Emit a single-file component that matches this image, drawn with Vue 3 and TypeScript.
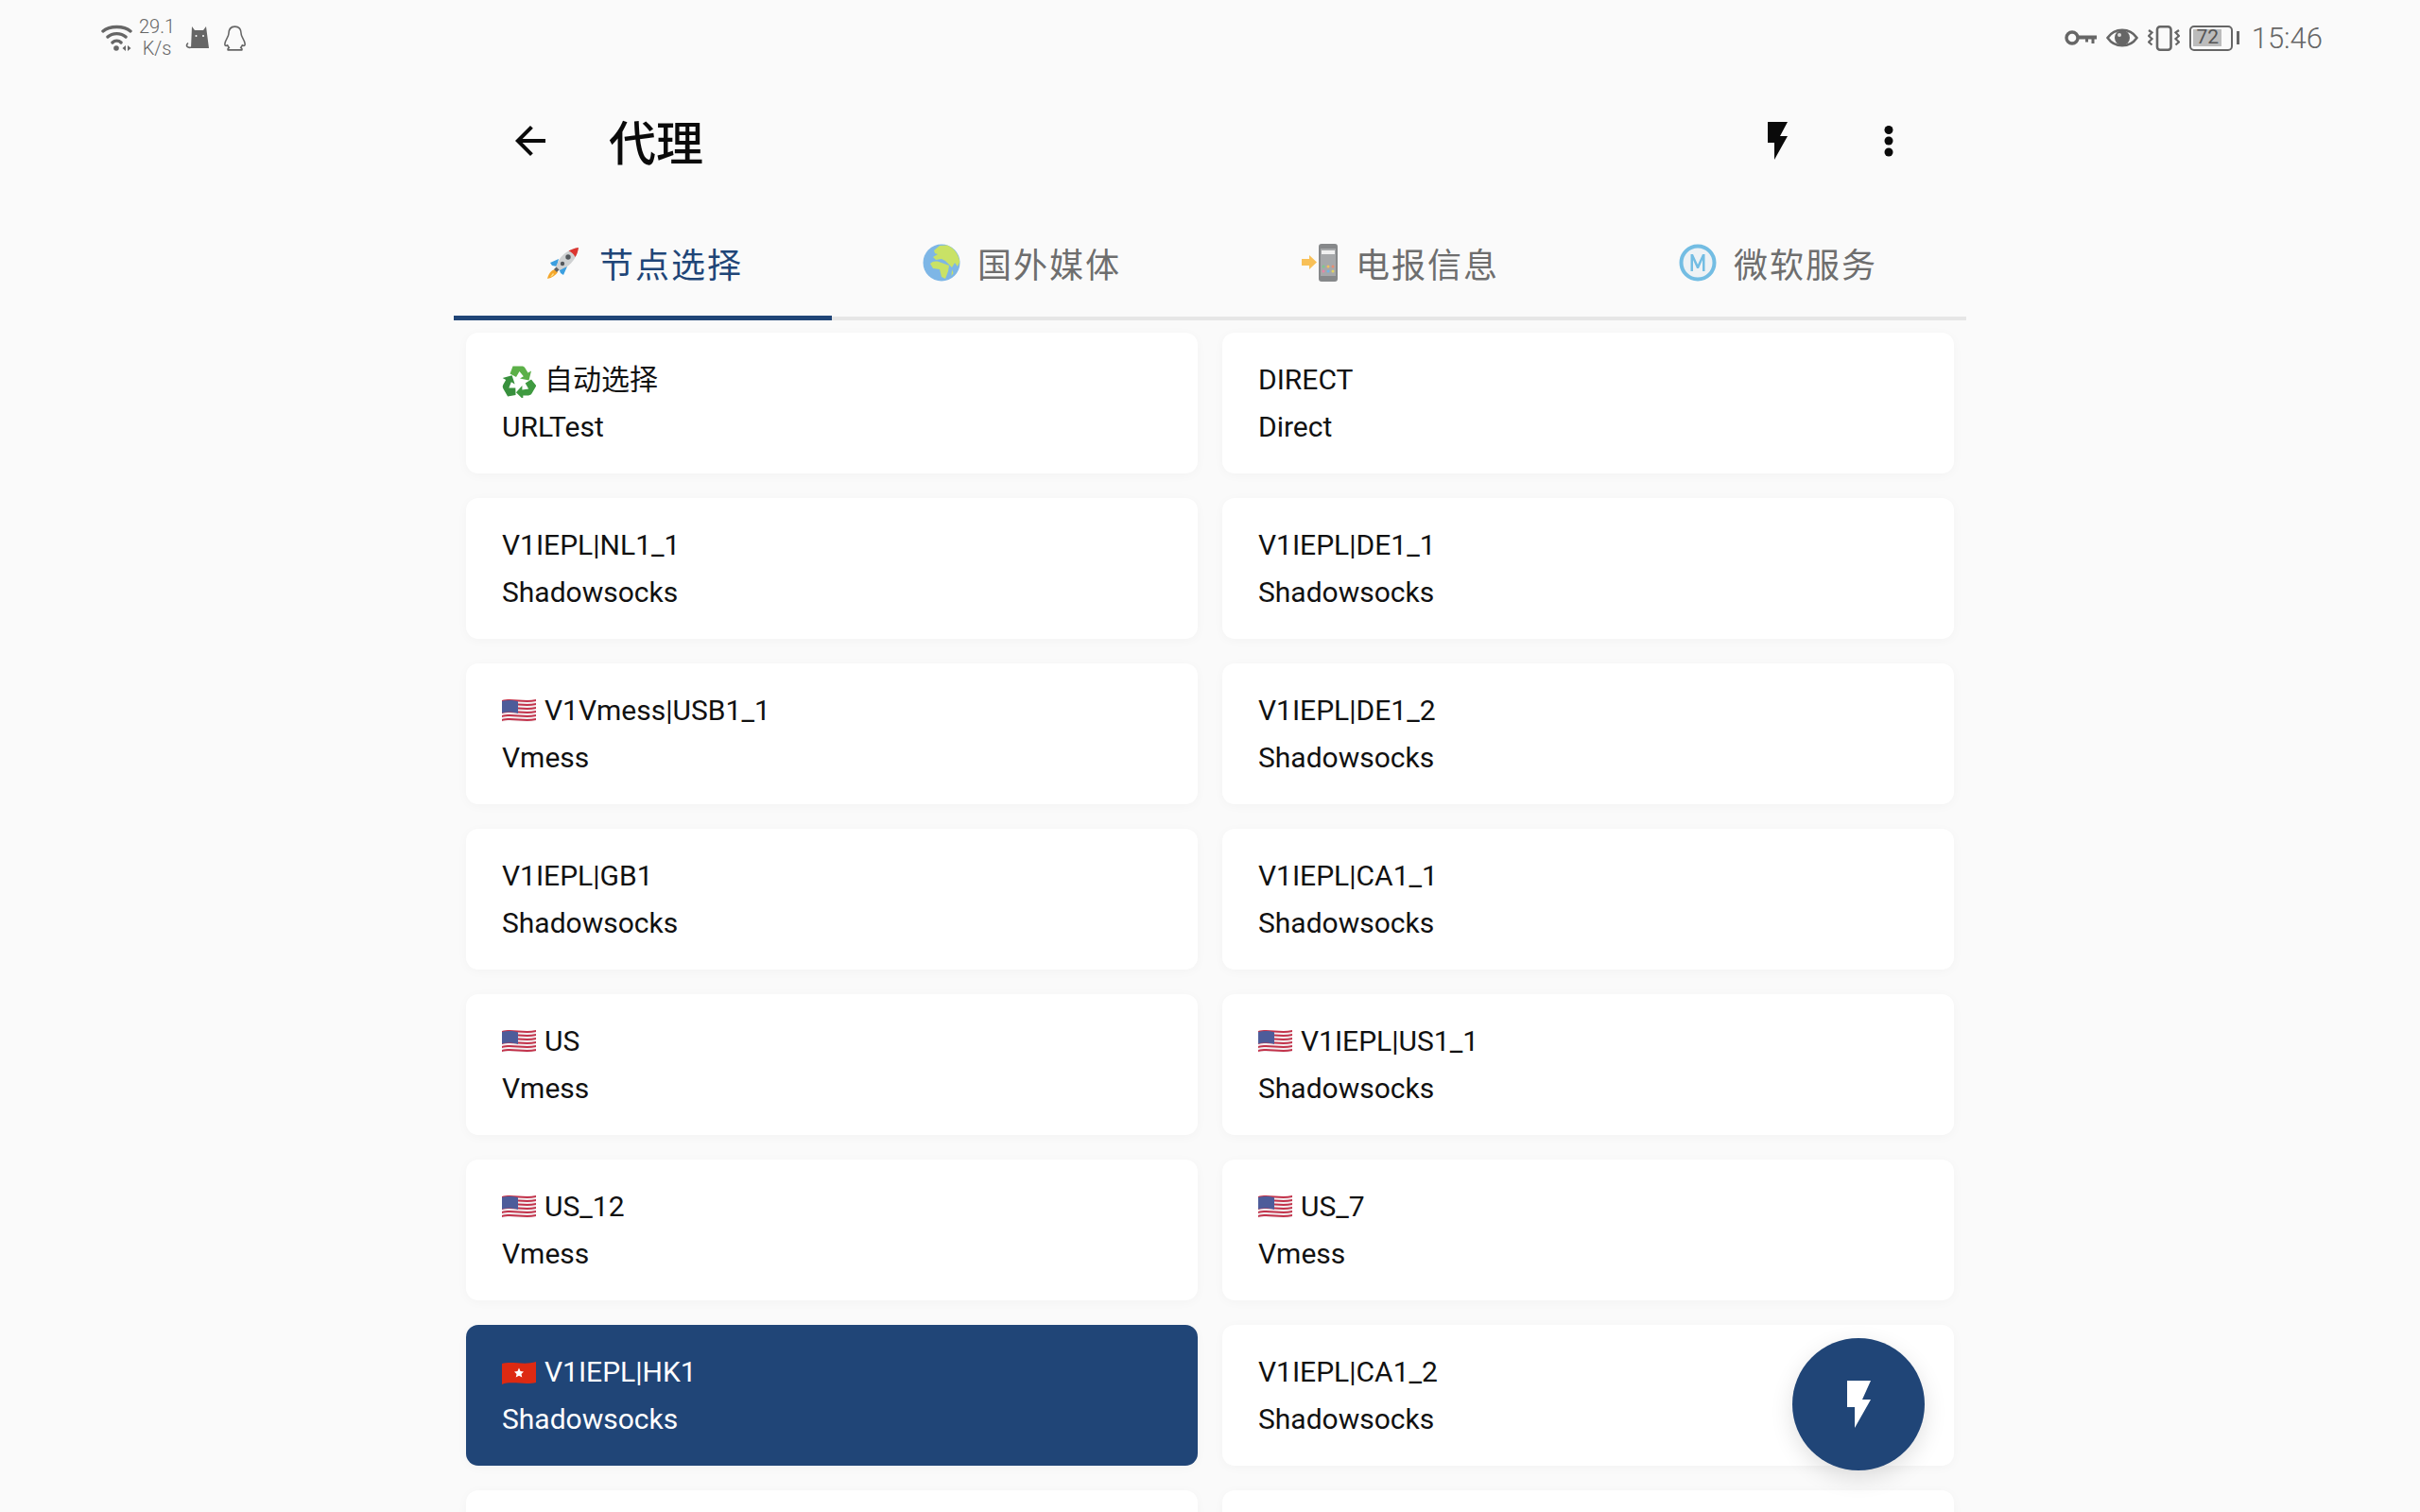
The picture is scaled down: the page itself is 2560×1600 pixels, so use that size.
<script setup lang="ts">
interface ProxyItem { name: string; type: string; flag?: string; selected?: boolean }
const tabs = [
  { key: 'rocket', label: '节点选择' },
  { key: 'globe', label: '国外媒体' },
  { key: 'phone', label: '电报信息' },
  { key: 'ms', label: '微软服务' },
]
const items: ProxyItem[] = [
  { name: '自动选择', type: 'URLTest', flag: 'recycle' },
  { name: 'DIRECT', type: 'Direct' },
  { name: 'V1IEPL|NL1_1', type: 'Shadowsocks' },
  { name: 'V1IEPL|DE1_1', type: 'Shadowsocks' },
  { name: 'V1Vmess|USB1_1', type: 'Vmess', flag: 'us' },
  { name: 'V1IEPL|DE1_2', type: 'Shadowsocks' },
  { name: 'V1IEPL|GB1', type: 'Shadowsocks' },
  { name: 'V1IEPL|CA1_1', type: 'Shadowsocks' },
  { name: 'US', type: 'Vmess', flag: 'us' },
  { name: 'V1IEPL|US1_1', type: 'Shadowsocks', flag: 'us' },
  { name: 'US_12', type: 'Vmess', flag: 'us' },
  { name: 'US_7', type: 'Vmess', flag: 'us' },
  { name: 'V1IEPL|HK1', type: 'Shadowsocks', flag: 'hk', selected: true },
  { name: 'V1IEPL|CA1_2', type: 'Shadowsocks' },
  { name: '', type: '' },
  { name: '', type: '' },
]
const wave = (y: number) => `M0 ${y + 1}C10 ${y - 2} 24 ${y + 3} 36 ${y}V${y + 2}C24 ${y + 5} 10 ${y} 0 ${y + 3}Z`
const usStripes = [1, 5, 9, 13, 17, 21].map(wave)
const recycleArrow = 'M11.500 2.500H21C22.500 2.500 23.500 3 24.500 4.500L27.500 9.500L31 7.500L28.500 17.500L19 15.500L22.800 13.300L18.500 8L15 14L8.500 10.500Z'
</script>

<template>
  <div class="screen">
    <div class="status">
      <div class="status-left">
        <svg class="s-wifi" width="33" height="28" viewBox="0 0 33 28">
          <path d="M2 7C9 1 24 1 31 7M7 13C12 8.500 21 8.500 26 13M12 19C14.500 16.500 18.500 16.500 21 19" fill="none" stroke="#666" stroke-width="3.400" stroke-linecap="round" />
          <circle cx="16" cy="25" r="2.800" fill="#666" />
          <path d="M26 22v6l-3.500-3zM28 22v6l3.500-3z" fill="#666" />
        </svg>
        <div class="speed"><span>29.1</span><span>K/s</span></div>
        <svg class="s-cat" width="26" height="24" viewBox="0 0 26 24">
          <path d="M7 0L10 4H19L22 0L25 23H6Z" fill="#666" />
          <path d="M7 22C2 23.500 0 20 3 17.500" fill="none" stroke="#666" stroke-width="1.600" />
          <circle cx="11.500" cy="10" r="1" fill="#fff" /><circle cx="19" cy="10" r="1" fill="#fff" />
        </svg>
        <svg class="s-qq" width="25" height="27" viewBox="2 2 22 24">
          <path d="M13 3C8.500 3 7 6.500 7 10.500c0 2-3.500 5.500-3.500 9 0 1.500 1 2 2.500 1 .5 1 1 1.500 1.500 2.500-1 .5-1.500 1-1 2h13c.5-1 0-1.500-1-2 .5-1 1-1.500 1.500-2.500 1.500 1 2.500.5 2.500-1 0-3.500-3.500-7-3.500-9C19 6.500 17.500 3 13 3z" fill="none" stroke="#666" stroke-width="1.400" />
        </svg>
      </div>
      <div class="status-right">
        <svg width="34" height="16" viewBox="0 0 34 16">
          <circle cx="8" cy="8" r="6" fill="none" stroke="#666" stroke-width="3.400" />
          <path d="M13 5.500H34V9.500H31.500V14H28.500V9.500H25V12.500H22V9.500H13Z" fill="#666" />
        </svg>
        <svg width="34" height="24" viewBox="0 0 34 24">
          <path d="M1.500 12C9 1 25 1 32.500 12 25 23 9 23 1.500 12z" fill="none" stroke="#666" stroke-width="2.600" />
          <circle cx="17" cy="12" r="8" fill="#666" />
          <circle cx="14" cy="9" r="2" fill="#ddd" />
        </svg>
        <svg width="34" height="27" viewBox="0 0 34 27">
          <rect x="10" y="1.300" width="14.500" height="24.400" rx="3" fill="none" stroke="#666" stroke-width="2.600" />
          <path d="M1 5l3.500 2.500L1 11l3.500 3L1 17.500l3.500 3M33 5l-3.500 2.500L33 11l-3.500 3L33 17.500l-3.500 3" fill="none" stroke="#666" stroke-width="2.200" />
        </svg>
        <div class="battery"><div class="batt-body"><div class="batt-fill">72</div></div><div class="batt-cap"></div></div>
        <span class="clock">15:46</span>
      </div>
    </div>

    <main class="page">
      <header class="appbar">
        <div class="appbar-left">
          <svg width="48" height="48" viewBox="0 0 24 24"><path d="M20 11H7.830l5.590-5.590L12 4l-8 8 8 8 1.410-1.410L7.830 13H20z" fill="#0a0a0a" /></svg>
          <h1>代理</h1>
        </div>
        <div class="appbar-right">
          <span class="icon-box"><svg width="21" height="40" viewBox="0 0 21 40"><path d="M0 0H21L13 15H21L7 40V22H0Z" fill="#0a0a0a" /></svg></span>
          <svg width="48" height="48" viewBox="0 0 48 48"><circle cx="24" cy="12.500" r="4.500" fill="#0a0a0a" /><circle cx="24" cy="24" r="4.500" fill="#0a0a0a" /><circle cx="24" cy="36" r="4.500" fill="#0a0a0a" /></svg>
        </div>
      </header>

      <nav class="tabs">
        <div v-for="(t, i) in tabs" :key="t.key" class="tab" :class="{ active: i === 0 }">
          <svg v-if="t.key === 'rocket'" width="40" height="40" viewBox="0 0 40 40">
            <path d="M15 16L6 20L8 23L13 24ZM24 24L20 33L17 31L15 26Z" fill="#3b9fe0" />
            <path d="M11 27C7 28 4 32 3 37c5-1 9-4 11-7z" fill="#f4a62a" />
            <path d="M9 31c-1 1-2 3-3 4 2-.5 3-1.500 4-3z" fill="#fde18a" />
            <path d="M10 27L13 24L16 27L13 30Z" fill="#5f6266" />
            <path d="M36 4C28 5 20 10 16 16L12 24L16 28L24 24C30 20 35 12 36 4Z" fill="#cfd1d2" />
            <path d="M36 4C32 4.500 28 6 25.500 7.500C28.500 8.500 31 11 32.500 14C34.500 11 35.500 7.500 36 4Z" fill="#dc3530" />
            <circle cx="25" cy="14" r="2.700" fill="#54585c" /><circle cx="19" cy="21" r="2.200" fill="#54585c" />
          </svg>
          <svg v-else-if="t.key === 'globe'" width="40" height="40" viewBox="0 0 40 40">
            <circle cx="20" cy="20" r="19.500" fill="#7db6e6" />
            <path d="M12 7L18 2L26 1.500C33 4 38 11 39.300 19L37 24L34 20L31 25L28 22L24 18L20 16L14 17L11 14L16 11L13 10Z" fill="#c9e266" />
            <path d="M8 21C11 17.500 16 18 20 20L28 23L27 29L24 37L20 35L18 27L11 26Z" fill="#c9e266" />
            <path d="M31 27l1.500 4-2 3z" fill="#c9e266" />
          </svg>
          <svg v-else-if="t.key === 'phone'" width="40" height="40" viewBox="0 0 40 40">
            <path d="M1 16H9V12L17 19.500L9 27V23H1Z" fill="#f8c057" />
            <rect x="19" y="0" width="20" height="40" rx="3" fill="#86888a" />
            <rect x="21" y="5" width="16" height="29" fill="#a6a8aa" />
            <rect x="22" y="7" width="14" height="4" fill="#f0f0f0" />
            <circle cx="24" cy="24" r="1.500" fill="#7bc98e" /><circle cx="29" cy="24" r="1.500" fill="#f0c060" /><circle cx="34" cy="24" r="1.500" fill="#e88c70" />
            <circle cx="24" cy="29" r="1.500" fill="#e884a6" /><circle cx="29" cy="29" r="1.500" fill="#72b4e4" /><circle cx="34" cy="29" r="1.500" fill="#e2d45e" />
          </svg>
          <svg v-else width="40" height="40" viewBox="0 0 40 40">
            <circle cx="20" cy="20" r="17.500" fill="#eef2f5" stroke="#73bde3" stroke-width="4" />
            <path d="M12.500 29V11h2.500l5 11 5-11h2.500v18h-2.500V17l-4 9h-2l-4-9v12z" fill="#73bde3" />
          </svg>
          <span>{{ t.label }}</span>
        </div>
      </nav>

      <section class="grid">
        <article v-for="(it, i) in items" :key="i" class="card" :class="{ selected: it.selected }">
          <div class="name">
            <svg v-if="it.flag === 'us'" class="flag" width="36" height="28" viewBox="0 0 36 28">
              <path d="M0 3C10 0 24 5 36 2V24C24 27 10 22 0 25Z" fill="#f3eef0" />
              <path v-for="(d, s) in usStripes" :key="s" :d="d" fill="#c2334b" />
              <path d="M0 3C6 1.500 12 2 17 3.300V16C12 14.500 6 14 0 15.500Z" fill="#4d5c9a" />
            </svg>
            <svg v-else-if="it.flag === 'hk'" class="flag" width="36" height="28" viewBox="0 0 36 28">
              <path d="M0 4C10 1 24 6 36 2V24C24 27 10 22 0 26Z" fill="#dd2a12" />
              <path d="M18 8.500l1.500 3.500 3.500.5-2.500 2.500.8 3.500-3.300-1.800-3.300 1.800.8-3.500L13 12.500l3.500-.5z" fill="#fff" />
            </svg>
            <svg v-else-if="it.flag === 'recycle'" class="flag" width="36" height="36" viewBox="0 0 36 36">
              <path :d="recycleArrow" fill="#5cb048" />
              <path :d="recycleArrow" fill="#3f9a40" transform="rotate(120 18 20)" />
              <path :d="recycleArrow" fill="#38903d" transform="rotate(240 18 20)" />
            </svg>
            <span>{{ it.name }}</span>
          </div>
          <div class="type">{{ it.type }}</div>
        </article>
      </section>

      <button class="fab" type="button" aria-label="test">
        <svg width="25" height="50" viewBox="0 0 25 50"><path d="M0 0H25L16 20H25L8 50V28H0Z" fill="#fff" /></svg>
      </button>
    </main>
  </div>
</template>

<style>
html, body { margin: 0; background: #fafafa; }
</style>

<style scoped>
.screen {
  width: 2560px;
  height: 1600px;
  overflow: hidden;
  background: #fafafa;
  font-family: Roboto, "Noto Sans CJK SC", sans-serif;
}
.status {
  height: 80px;
  padding: 0 103px 0 107px;
  box-sizing: border-box;
  display: flex;
  align-items: center;
  justify-content: space-between;
  color: #666;
}
.status-left { display: flex; align-items: center; }
.s-cat { margin-left: 12px; }
.s-qq { margin-left: 14px; }
.status-right { display: flex; align-items: center; gap: 10px; }
.speed {
  width: 36px;
  margin-left: 8px;
  display: flex;
  flex-direction: column;
  align-items: center;
  font-size: 20px;
  line-height: 23px;
  font-weight: 300;
  white-space: nowrap;
}
.battery { display: flex; align-items: center; gap: 4px; }
.batt-body {
  width: 46px;
  height: 27px;
  box-sizing: border-box;
  border: 2.500px solid #666;
  border-radius: 5px;
  padding: 2.500px;
}
.batt-fill {
  width: 30px;
  height: 100%;
  background: #bcbcbc;
  font-size: 21px;
  line-height: 17px;
  text-align: center;
  color: #555;
}
.batt-cap { width: 3px; height: 14px; background: #666; }
.clock { font-size: 31px; font-weight: 300; margin-left: 3px; color: #666; }

.page { position: relative; width: 1600px; margin: 0 auto; }
.appbar {
  height: 112px;
  margin-top: 13px;
  display: flex;
  align-items: center;
  justify-content: space-between;
  padding: 0 58px 0 57px;
}
.appbar-left { display: flex; align-items: center; gap: 59px; }
.appbar-left h1 { margin: -2px 0 0; font-size: 50px; font-weight: 500; color: #0a0a0a; }
.appbar-right { display: flex; gap: 70px; }
.icon-box { width: 48px; height: 48px; display: flex; align-items: center; justify-content: center; }
.tabs {
  height: 134px;
  display: grid;
  grid-template-columns: repeat(4, 1fr);
  border-bottom: 4px solid #e6e6e6;
  box-sizing: border-box;
}
.tab {
  display: flex;
  align-items: center;
  justify-content: center;
  gap: 18px;
  padding: 16px 0 0 2px;
  font-size: 36px;
  letter-spacing: 2px;
  color: #6e6e6e;
  margin-bottom: -4px;
  border-bottom: 5px solid transparent;
}
.tab.active { color: #204577; border-bottom-color: #204577; }
.grid {
  display: grid;
  grid-template-columns: 1fr 1fr;
  gap: 26px;
  padding: 13px 13px 0;
}
.card {
  height: 149px;
  box-sizing: border-box;
  padding: 25px 38px;
  border-radius: 13px;
  background: #fff;
  color: #111;
  font-size: 30px;
  line-height: 50px;
  box-shadow: 0 2px 12px rgba(0, 0, 0, 0.03);
}
.card.selected { background: #204577; color: #fff; }
.name { display: flex; align-items: center; gap: 9px; height: 50px; }
.flag { flex: none; margin-top: 2px; }
.fab {
  position: absolute;
  left: 1416px;
  top: 1323px;
  width: 140px;
  height: 140px;
  border: 0;
  border-radius: 50%;
  background: #204577;
  display: flex;
  align-items: center;
  justify-content: center;
  box-shadow: 0 8px 24px rgba(0, 0, 0, 0.12);
  padding: 0;
}
</style>
